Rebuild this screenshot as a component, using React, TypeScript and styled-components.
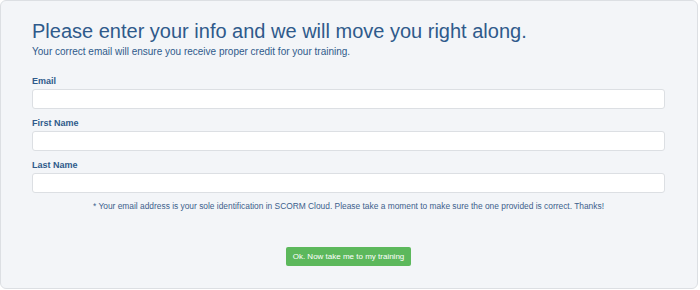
import styled, { createGlobalStyle } from "styled-components";

const GlobalStyle = createGlobalStyle`
    html, body {
        margin: 0;
        padding: 0;
        background: #ffffff;
    }
    body {
        font-family: "Liberation Sans", Arial, sans-serif;
    }
`;

const fields = [
    { id: "email", label: "Email", type: "email" },
    { id: "firstName", label: "First Name", type: "text" },
    { id: "lastName", label: "Last Name", type: "text" },
];

const App = () => {
    return (
        <>
            <GlobalStyle />
            <Panel>
                <Heading>Please enter your info and we will move you right along.</Heading>
                <Subtitle>Your correct email will ensure you receive proper credit for your training.</Subtitle>

                <Form onSubmit={(e) => e.preventDefault()}>
                    {fields.map((f) => (
                        <Field key={f.id}>
                            <Label htmlFor={f.id}>{f.label}</Label>
                            <Input id={f.id} type={f.type} />
                        </Field>
                    ))}

                    <Note>
                        * Your email address is your sole identification in SCORM Cloud. Please take a moment to make
                        sure the one provided is correct. Thanks!
                    </Note>

                    <Actions>
                        <SubmitButton type="submit">Ok. Now take me to my training</SubmitButton>
                    </Actions>
                </Form>
            </Panel>
        </>
    );
};

export default App;

const Panel = styled.div`
    box-sizing: border-box;
    width: 698px;
    height: 289px;
    padding: 18px 32px 0 31px;
    background-color: #f3f5f8;
    border: 1px solid #dcdfe3;
    border-radius: 6px;
    color: #2f5988;
`;

const Heading = styled.h1`
    margin: 0;
    font-size: 20px;
    font-weight: 400;
    line-height: 24px;
    color: #2f5a8b;
`;

const Subtitle = styled.p`
    margin: 2px 0 0;
    font-size: 10px;
    line-height: 14px;
    color: #2f5a8b;
`;

const Form = styled.form`
    margin-top: 16px;
    display: flex;
    flex-direction: column;
`;

const Field = styled.div`
    display: flex;
    flex-direction: column;
    margin-bottom: 7px;
`;

const Label = styled.label`
    font-size: 9px;
    font-weight: 700;
    line-height: 12px;
    color: #2f5a8b;
    margin-bottom: 2px;
`;

const Input = styled.input`
    box-sizing: border-box;
    width: 100%;
    height: 20px;
    margin: 0 0 1px;
    padding: 2px 6px;
    background: #ffffff;
    border: 1px solid #dcdfe3;
    border-radius: 3px;
    font-family: inherit;
    font-size: 10px;
    outline: none;
`;

const Note = styled.p`
    margin: -1px 0 0;
    text-align: center;
    font-size: 8.4px;
    line-height: 12px;
    color: #3d5f8c;
`;

const Actions = styled.div`
    display: flex;
    justify-content: center;
    margin-top: 35px;
`;

const SubmitButton = styled.button`
    height: 19px;
    padding: 0 7px;
    border: none;
    border-radius: 2px;
    background-color: #5cb85c;
    color: #ffffff;
    font-family: inherit;
    font-size: 8px;
    cursor: pointer;
`;
